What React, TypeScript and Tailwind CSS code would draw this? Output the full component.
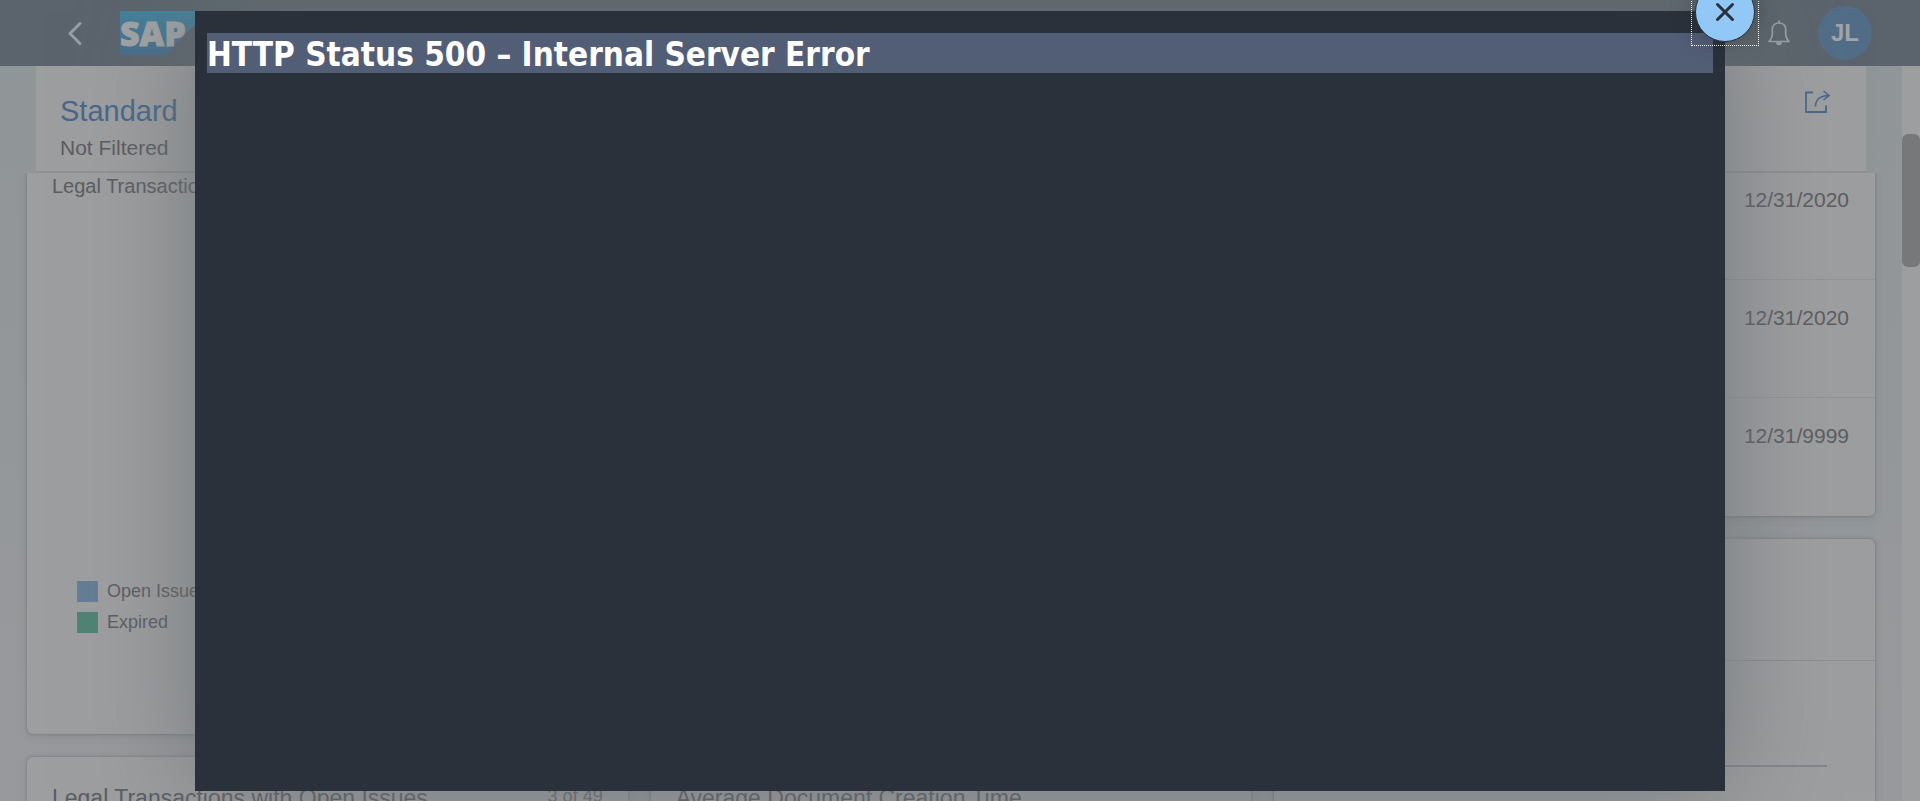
import type { ReactNode } from "react";

function Card({ className = "", children }: { className?: string; children?: ReactNode }) {
  return (
    <section className={`bg-[#9d9ea0] shadow-[0_0_3px_rgba(60,65,70,0.4),0_3px_10px_rgba(60,65,70,0.1)] ${className}`}>
      {children}
    </section>
  );
}

function SapLogo() {
  return (
    <svg viewBox="0 0 88 44" className="h-11 w-[88px]" role="img" aria-label="SAP">
      <defs>
        <linearGradient id="sapBlue" x1="0" y1="0" x2="0" y2="1">
          <stop offset="0" stopColor="#43829b" />
          <stop offset="1" stopColor="#476c8b" />
        </linearGradient>
      </defs>
      <path d="M0 0H88L45 44H0Z" fill="url(#sapBlue)" />
      <text
        x="0"
        y="35"
        fontFamily="Open Sans, Noto Sans, sans-serif"
        fontWeight="800"
        fontSize="34"
        fill="#a1a4a6"
        stroke="#a1a4a6"
        strokeWidth="1"
      >
        SAP
      </text>
    </svg>
  );
}

function ShellBar() {
  return (
    <header className="flex h-[66px] shrink-0 items-center justify-between bg-[#5b646c] pr-12 pl-[62px]">
      <div className="flex items-center gap-9">
        <button aria-label="Back" className="flex h-8 w-[22px] items-center justify-center">
          <svg viewBox="0 0 22 32" className="h-8 w-[22px]" fill="none" stroke="#969da7" strokeWidth="3">
            <path d="M18 6.500L8 16.500L18 26.500" strokeLinecap="round" strokeLinejoin="round" />
          </svg>
        </button>
        <a href="#home">
          <SapLogo />
        </a>
      </div>
      <div className="flex items-center gap-7">
        <button aria-label="Notifications">
          <svg viewBox="0 0 22 26" className="h-[26px] w-[22px]" fill="none" stroke="#9aa1a8" strokeWidth="1.7">
            <path d="M1 21.5C3 19.5 4.3 17.5 4.3 14V9.5C4.3 5.8 7 3 11 3s6.700 2.800 6.700 6.500V14c0 3.500 1.300 5.500 3.300 7.500Z" strokeLinejoin="round" />
            <path d="M11 3V1" strokeLinecap="round" />
            <path d="M8 22.200h6c0 4-6 4-6 0Z" fill="#9aa1a8" stroke="none" />
          </svg>
        </button>
        <button className="flex size-[54px] items-center justify-center rounded-full bg-[#526d87] text-2xl font-bold text-[#a2a5a8]">
          JL
        </button>
      </div>
    </header>
  );
}

function FilterBar() {
  return (
    <div className="mx-9 flex h-[107px] shrink-0 justify-between border-b-2 border-[#8e9092] bg-[#9d9ea0] pt-6 pr-9 pl-6">
      <div>
        <h2 className="text-[29px] leading-[42px] text-[#48678b]">Standard</h2>
        <p className="text-[21px] leading-8">Not Filtered</p>
      </div>
      <button aria-label="Share" className="h-6 w-[26px]">
        <svg viewBox="0 0 26 24" className="h-6 w-[26px]" fill="none" stroke="#48678b">
          <path d="M9 2.500H2V22H22V15.500" strokeWidth="1.800" />
          <path d="M11.500 16.500C11.500 10 15 6 24.500 5.500M19.500 1L25 5.500L19.500 10" strokeWidth="1.600" />
        </svg>
      </button>
    </div>
  );
}

const dates = ["12/31/2020", "12/31/2020", "12/31/9999"];

const legend = [
  { label: "Open Issues", swatch: "bg-[#667d96]" },
  { label: "Expired", swatch: "bg-[#4f8371]" },
];

function Dashboard() {
  return (
    <div className="grid min-h-0 flex-1 grid-cols-3 gap-[23px] overflow-hidden px-[27px]">
      <div className="flex flex-col gap-[23px]">
        <Card className="flex h-[561px] shrink-0 flex-col justify-between rounded-b-md px-[25px] pb-[101px]">
          <p className="text-xl leading-[26px]">Legal Transactions</p>
          <ul className="flex flex-col gap-[9px] pl-[25px]">
            {legend.map((item) => (
              <li key={item.label} className="flex items-center gap-[9px] text-[18px] leading-[22px]">
                <span className={`size-[21px] ${item.swatch}`} />
                {item.label}
              </li>
            ))}
          </ul>
        </Card>
        <Card className="flex h-96 shrink-0 items-start justify-between rounded-md px-[25px] pt-[25px]">
          <h3 className="text-[23px] leading-8">Legal Transactions with Open Issues</h3>
          <span className="text-[18px] leading-7 text-[#68696c]">3 of 49</span>
        </Card>
      </div>

      <div className="flex flex-col gap-[23px]">
        <Card className="h-[561px] shrink-0 rounded-b-md" />
        <Card className="h-96 shrink-0 rounded-md px-[25px] pt-[25px]">
          <h3 className="text-[23px] leading-8">Average Document Creation Time</h3>
        </Card>
      </div>

      <div className="flex flex-col gap-[23px]">
        <Card className="flex h-[343px] shrink-0 flex-col justify-end rounded-b-md">
          <ul className="divide-y divide-[#929395]">
            {dates.map((date, i) => (
              <li key={i} className="flex h-[118px] justify-end pt-[26px] pr-[26px] text-[21px] leading-6">
                {date}
              </li>
            ))}
          </ul>
        </Card>
        <Card className="h-[480px] shrink-0 rounded-md">
          <div className="h-[122px] border-b border-[#8d8e90]" />
          <div className="mx-12 h-[106px] border-b-2 border-[#84858b]" />
        </Card>
      </div>
    </div>
  );
}

function ErrorDialog() {
  return (
    <div
      role="dialog"
      aria-modal="true"
      aria-labelledby="error-title"
      className="absolute inset-x-[195px] top-[11px] bottom-[10px] bg-[#2a313a] px-3 pt-[22px] shadow-[0_0_100px_rgba(108,112,115,0.8)]"
    >
      <h1
        id="error-title"
        className="bg-[#525d76] pt-1 font-['DejaVu_Sans_Condensed','DejaVu_Sans',sans-serif] text-[33px] leading-9 font-bold text-white"
      >
        HTTP Status 500 – Internal Server Error
      </h1>
      <button
        aria-label="Close"
        className="absolute -top-[33px] -right-[34px] flex size-[68px] items-center justify-center border border-dotted border-white"
      >
        <span className="flex size-[60px] items-center justify-center rounded-full border border-[#2a313a] bg-[#91c8f6] shadow-[0_0_24px_rgba(30,35,42,0.4)]">
          <svg viewBox="0 0 20 20" className="size-5" stroke="#2a313a" strokeWidth="3" strokeLinecap="round">
            <path d="M2.500 2.500L17.500 17.500M17.500 2.500L2.500 17.500" />
          </svg>
        </span>
      </button>
    </div>
  );
}

export default function App() {
  return (
    <div className="relative flex h-screen flex-col overflow-hidden bg-[#94989a] font-['Liberation_Sans',Arial,sans-serif] text-[#5b5d61]">
      <ShellBar />
      <div className="flex min-h-0 flex-1">
        <main className="flex min-w-0 flex-1 flex-col bg-linear-to-b from-[#909597] to-[#98999c]">
          <FilterBar />
          <Dashboard />
        </main>
        <div className="w-[18px] shrink-0 bg-[#9d9ea0] pt-[68px]">
          <div className="h-[133px] rounded-md bg-[#77787a]" />
        </div>
      </div>
      <ErrorDialog />
    </div>
  );
}
